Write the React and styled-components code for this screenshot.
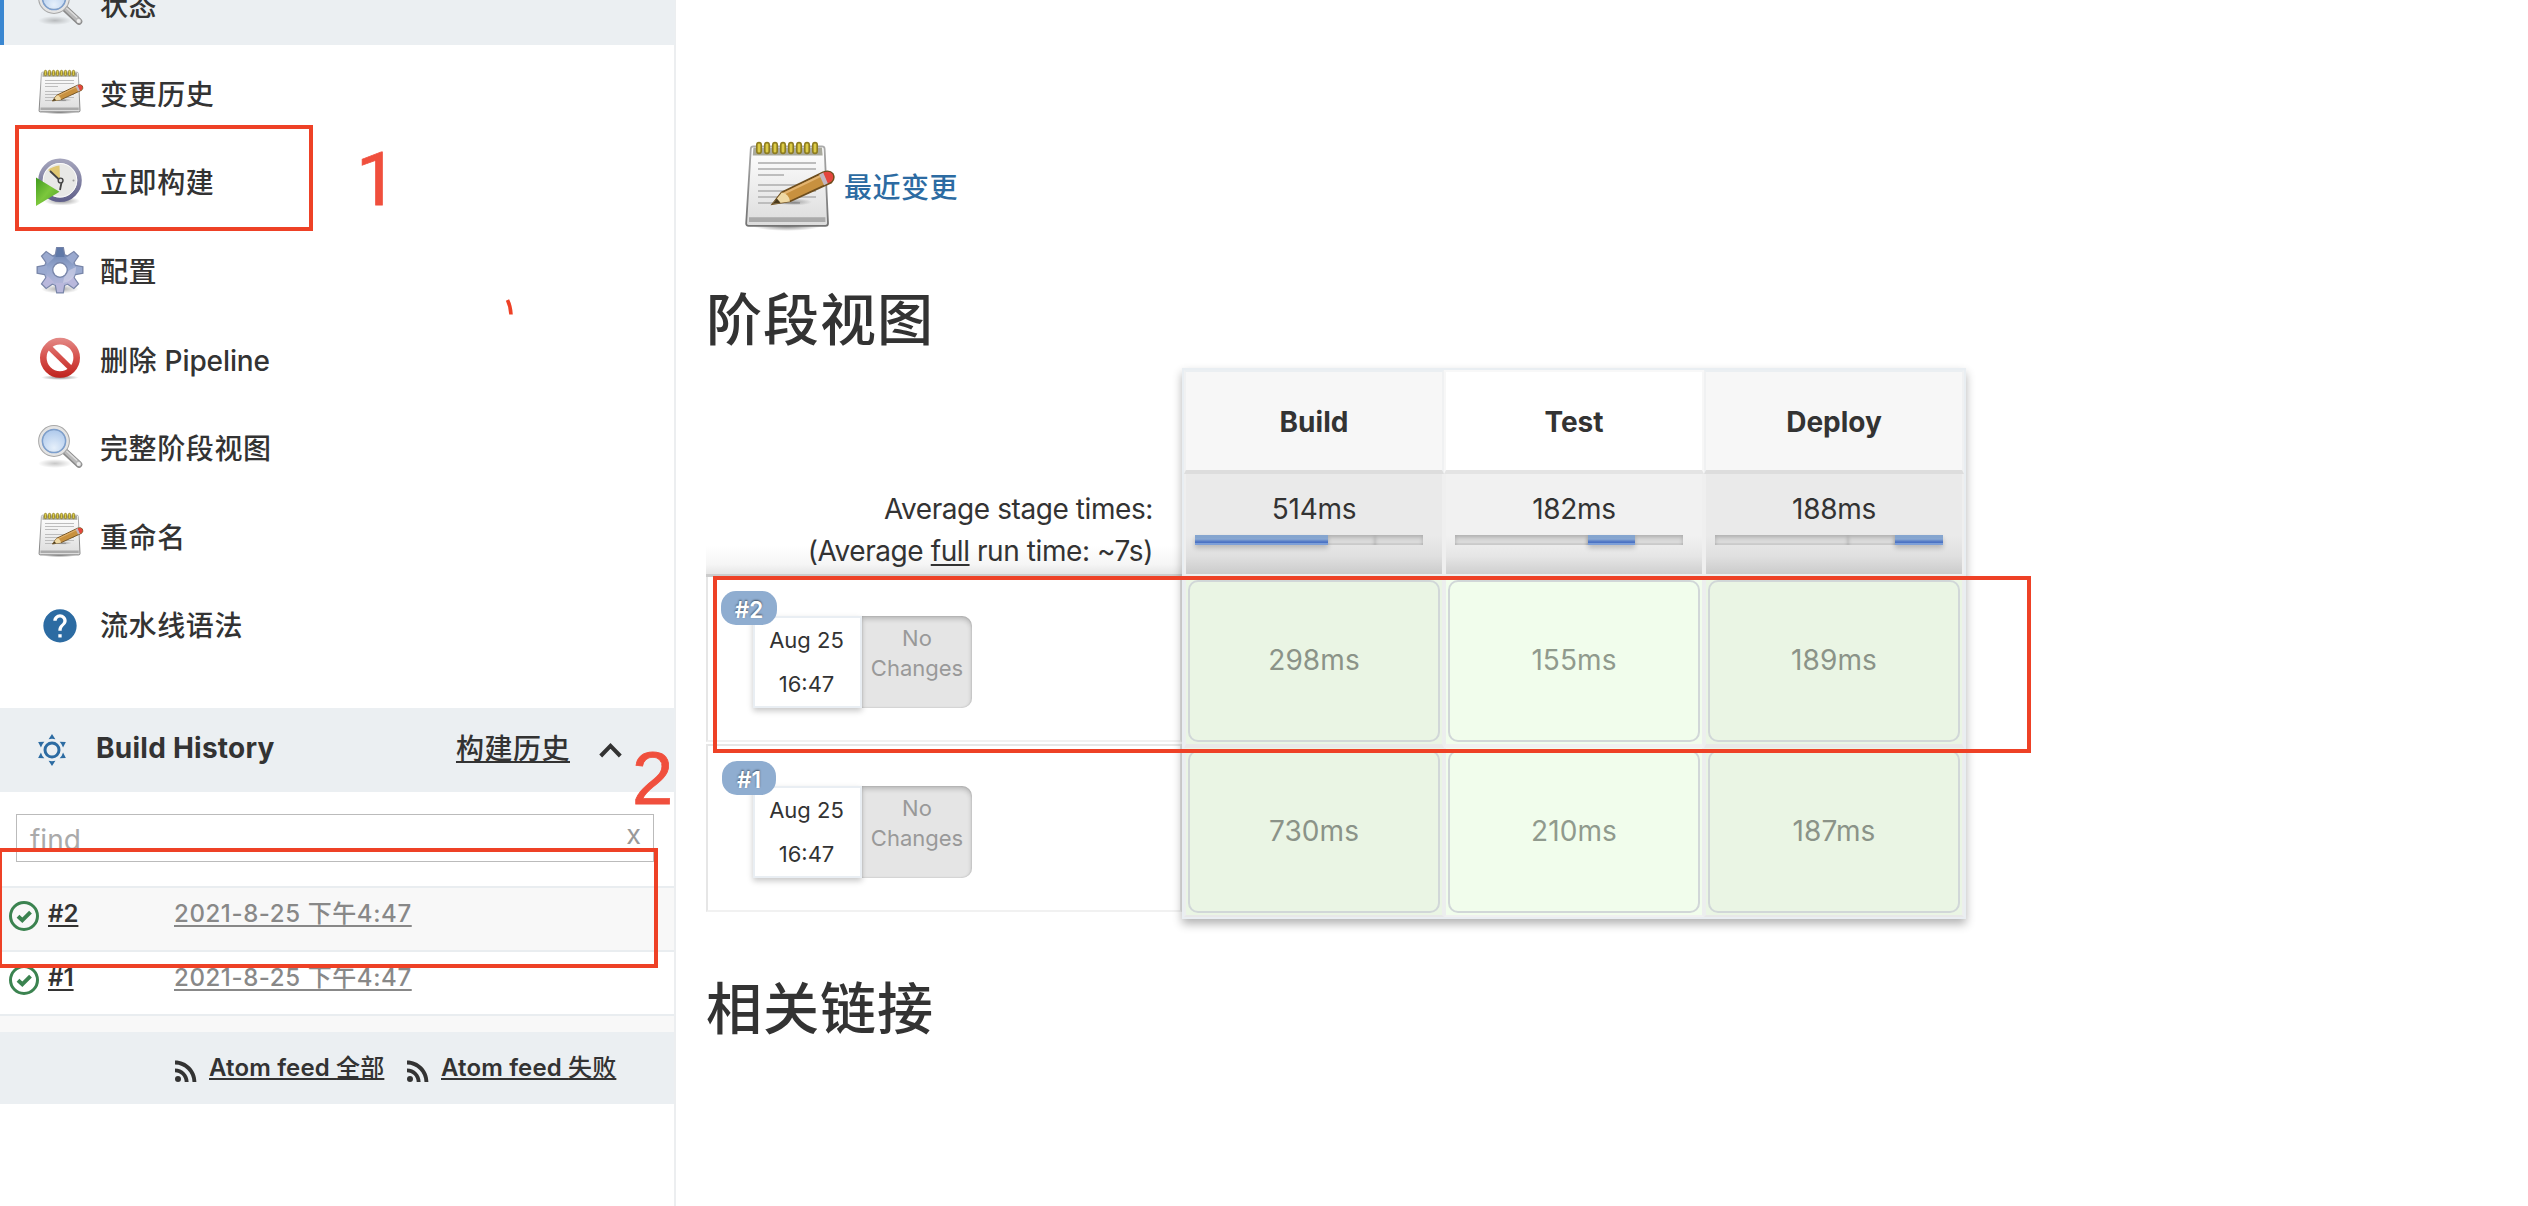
import React from "react";
import styled, { createGlobalStyle } from "styled-components";

const RED = "#ee4126";
const INK = "#333";

const GlobalStyle = createGlobalStyle`
  *, *::before, *::after { box-sizing: border-box; }
  body {
    margin: 0;
    background: #fff;
    color: ${INK};
    font-family: Inter, "Noto Sans CJK SC", sans-serif;
    font-size: 28px;
    overflow: hidden;
  }
  a { color: inherit; }
`;

/* ---------- layout ---------- */

const Page = styled.div`
  position: relative;
  display: flex;
  width: 2528px;
  height: 1206px;
  overflow: hidden;
`;

const Sidebar = styled.aside`
  flex: none;
  width: 676px;
  height: 100%;
  border-right: 2px solid #eceef0;
`;

const Main = styled.main`
  flex: 1;
  padding: 140px 0 0 30px;
`;

/* ---------- task list ---------- */

const ActiveTask = styled.div`
  height: 45px;
  overflow: hidden;
  background: #ebeff2;
  border-left: 4px solid #3a87d1;
  margin-right: -1px;
  margin-bottom: 4.6px;
  & > a {
    margin: -39px 0 0 -4px;
  }
`;

const Task = styled.a`
  display: flex;
  align-items: center;
  gap: 16px;
  height: 88.6px;
  padding-left: 36px;
  color: ${INK};
  font-weight: 500;
  letter-spacing: 0.6px;
  text-decoration: none;
  svg {
    flex: none;
    margin-top: -1px;
  }
`;

const TaskLabel = styled.span`
  margin-top: -2px;
`;

const Latin = styled.span`
  letter-spacing: -0.1px;
`;

/* ---------- build history ---------- */

const HistoryPanel = styled.section`
  margin-top: 38px;
`;

const HistoryHeader = styled.header`
  display: flex;
  align-items: center;
  height: 84px;
  padding: 0 53px 0 38px;
  background: #ebeff2;
  margin-right: -1px;
`;

const HistoryTitle = styled.h3`
  flex: 1;
  margin: -4px 0 0 30px;
  font-size: 28px;
  font-weight: 700;
  letter-spacing: 0.25px;
`;

const TrendLink = styled.a`
  margin: -6px 29px 0 0;
  font-weight: 500;
  letter-spacing: 0.5px;
  text-decoration-thickness: 2px;
  text-underline-offset: 2px;
  text-decoration-skip-ink: none;
`;

const Search = styled.div`
  display: flex;
  justify-content: space-between;
  width: 638px;
  height: 48px;
  margin: 22px 0 24px 16px;
  padding: 0 12px 0 13px;
  border: 1px solid #bbb;
  line-height: 51px;
  color: #aaa;
`;

const Clear = styled.span`
  font-size: 27px;
  line-height: 39px;
  color: #999;
`;

const BuildRow = styled.div`
  display: flex;
  height: 64px;
  padding: 13px 0 0 9px;
  border-top: 2px solid #e9edf0;
  background: ${(p) => (p.$shade ? "#f8f8f8" : "#fff")};
  font-size: 24px;
  line-height: 24px;
`;

const BuildNumber = styled.a`
  width: 126px;
  margin: 1px 0 0 9px;
  font-weight: 600;
  text-decoration-thickness: 2px;
  text-underline-offset: 3px;
  text-decoration-skip-ink: none;
`;

const BuildDate = styled.a`
  margin-top: 1px;
  color: #888;
  font-weight: 500;
  letter-spacing: 0.6px;
  text-decoration-thickness: 2px;
  text-underline-offset: 3px;
  text-decoration-skip-ink: none;
`;

const RowTail = styled.div`
  height: 18px;
  border-top: 2px solid #e9edf0;
  background: #f8f8f8;
`;

const Feeds = styled.footer`
  display: flex;
  height: 72px;
  padding: 28px 0 0 175px;
  gap: 22px;
  background: #ebeff2;
`;

const Feed = styled.a`
  display: flex;
  gap: 12px;
  width: 210px;
  text-decoration: none;
`;

const FeedLabel = styled.span`
  margin-top: -5px;
  font-size: 24px;
  line-height: 26px;
  font-weight: 600;
  letter-spacing: 0.15px;
  white-space: nowrap;
  text-decoration: underline 2px;
  text-underline-offset: 2px;
  text-decoration-skip-ink: none;
`;

const Medium = styled.span`
  font-weight: 500;
`;

/* ---------- main column ---------- */

const RecentChanges = styled.a`
  display: flex;
  align-items: center;
  gap: 8px;
  height: 96px;
  padding-left: 34px;
  color: #2c6ba2;
  font-weight: 500;
  letter-spacing: 0.5px;
  text-decoration: none;
  span {
    margin-top: -4px;
  }
`;

const Heading = styled.h2`
  margin: ${(p) => p.$top} 0 0 0;
  font-size: 56px;
  line-height: 72px;
  font-weight: 500;
  letter-spacing: 1px;
`;

const StageView = styled.div`
  display: flex;
  width: 1260px;
  margin-top: 12px;
`;

const RunColumn = styled.div`
  width: 476px;
  padding-top: 106px;
`;

const Averages = styled.div`
  height: 103px;
  padding: 14px 29px 0 0;
  border-bottom: 3px solid #ccc;
  background: linear-gradient(#fff 72px, #f6f6f6 90px, #e6e6e6 100px);
  text-align: right;
  line-height: 42px;
  letter-spacing: -0.42px;
  u {
    text-decoration-thickness: 2px;
    text-underline-offset: 3px;
  }
`;

const Run = styled.div`
  position: relative;
  display: flex;
  height: ${(p) => p.$height};
  margin-bottom: 2px;
  padding: ${(p) => p.$pad} 0 0 45px;
  border: 2px solid #e6e6e6;
  border-top-width: ${(p) => (p.$first ? "0" : "2px")};
  border-bottom-color: #f1f1f1;
`;

const RunBadge = styled.span`
  position: absolute;
  left: ${(p) => p.$left};
  top: ${(p) => p.$top};
  width: ${(p) => p.$width};
  height: 34px;
  border-radius: 15px;
  background: #8fadd0;
  color: #fff;
  font-size: 22.5px;
  font-weight: 600;
  line-height: 37px;
  text-align: center;
  text-shadow: 0 -1px 2px rgba(0, 0, 0, 0.55);
`;

const RunTime = styled.div`
  width: 109px;
  height: 92px;
  padding-right: 2px;
  border: 2px solid #e9eef3;
  background: #fff;
  box-shadow: 0 3px 6px rgba(0, 0, 0, 0.22);
  font-size: 22px;
  line-height: 44px;
  text-align: center;
`;

const NoChanges = styled.div`
  width: 110px;
  height: 92px;
  padding-top: 7px;
  border-radius: 0 10px 10px 0;
  background: #e5e5e5;
  box-shadow: inset 0 3px 5px rgba(0, 0, 0, 0.2), inset 0 0 2px rgba(0, 0, 0, 0.2);
  color: #999;
  font-size: 22px;
  line-height: 30px;
  text-align: center;
`;

const StageGrid = styled.div`
  position: relative;
  display: grid;
  grid-template-columns: repeat(3, 260px);
  grid-template-rows: 104px 102px 172px 169px;
  border: 2px solid #e9eef2;
  box-shadow: 0 5px 9px rgba(0, 0, 0, 0.3);
`;

const StageName = styled.div`
  border: 2px solid ${(p) => (p.$odd ? "#f0f1f2" : "#f7f7f7")};
  border-top-color: ${(p) => (p.$odd ? "#ebeff2" : "#f8f8f8")};
  border-bottom: 4px solid ${(p) => (p.$odd ? "#ddd" : "#e4e4e4")};
  background: ${(p) => (p.$odd ? "#f7f7f7" : "#fff")};
  font-weight: 700;
  line-height: 101px;
  letter-spacing: 0;
  text-align: center;
`;

const StageAverage = styled.div`
  padding: 14px 0 0 9px;
  border: 0 solid #efefef;
  border-width: 0 2px 2px;
  background: ${(p) =>
    p.$odd
      ? "linear-gradient(#eaeaea 62px, #e0e0e0 82px, #cbcbcb 100px)"
      : "linear-gradient(#f1f1f1 62px, #e6e6e6 82px, #cfcfcf 100px)"};
  line-height: 42px;
`;

const StageAverageText = styled.div`
  padding-right: 9px;
  text-align: center;
  letter-spacing: -0.3px;
`;

const Track = styled.div`
  display: flex;
  width: 228px;
  height: 10px;
  margin-top: 5px;
`;

const Segment = styled.i`
  flex: ${(p) => p.$share};
  background: ${(p) =>
    p.$on ? "linear-gradient(#85a5cf 0 3px, #8aa9d4 4px, #4c73c4 7px 8px, #7d9fd8 8px)" : "#dadada"};
  box-shadow: ${(p) =>
    p.$on
      ? "0 3px 5px rgba(0, 0, 0, 0.2)"
      : "inset 0 2px 4px rgba(0, 0, 0, 0.22), inset 0 -2px 0 #d0d0d0"};
`;

const StageCell = styled.div`
  padding: ${(p) => p.$pad};
  border: 0 solid #eceeee;
  border-width: 0 2px ${(p) => p.$rule};
  border-bottom-color: ${(p) => (p.$odd ? "#e8e8e8" : "#f0f0f0")};
  background: ${(p) => (p.$odd ? "#eaf5e4" : "#f1fdec")};
`;

const StageResult = styled.div`
  height: 100%;
  border: 2px solid #d1d7d8;
  border-radius: 10px;
  color: ${(p) => (p.$odd ? "#8b9388" : "#909a8d")};
  line-height: ${(p) => p.$line};
  letter-spacing: 0.1px;
  text-align: center;
`;

/* ---------- markup drawn over the page ---------- */

const MarkBox = styled.div`
  position: absolute;
  left: ${(p) => p.$x}px;
  top: ${(p) => p.$y}px;
  width: ${(p) => p.$w}px;
  height: ${(p) => p.$h}px;
  border: 4px solid ${RED};
`;

const MarkDigit = styled.span`
  position: absolute;
  left: ${(p) => p.$x}px;
  top: ${(p) => p.$y}px;
  color: #f04f3d;
  font-family: ${(p) => p.$font}, sans-serif;
  font-size: 74px;
  line-height: 74px;
  -webkit-text-stroke: 0.8px #f04f3d;
`;

const MarkTick = styled.svg`
  position: absolute;
  left: 504px;
  top: 297px;
`;

/* ---------- icons ---------- */

const rings = [9.5, 13.5, 17.5, 21.5, 25.5, 29.5, 33.5, 37.5];

const Notepad = ({ size = 48 }) => (
  <svg width={size} height={size} viewBox="0 0 48 48">
    <defs>
      <linearGradient id="pad" x1="0" y1="0" x2="0" y2="1">
        <stop offset="0" stopColor="#fff" />
        <stop offset="1" stopColor="#dcdcdc" />
      </linearGradient>
      <radialGradient id="padShade">
        <stop offset="0" stopColor="#000" stopOpacity=".5" />
        <stop offset="1" stopColor="#000" stopOpacity="0" />
      </radialGradient>
      <linearGradient id="padEdge" x1="0" y1="0" x2="0" y2="1">
        <stop offset="0" stopColor="#aaa" />
        <stop offset="1" stopColor="#737373" />
      </linearGradient>
    </defs>
    <ellipse cx="23.5" cy="43" rx="17" ry="2.5" fill="url(#padShade)" />
    <path d="M6.600 3.200H41q1.200 0 1.300 1.200L44 41.600q0 1.300-1.300 1.300H4.300Q3 42.900 3.100 41.600L5.400 4.400Q5.500 3.200 6.600 3.200Z" fill="url(#pad)" stroke="url(#padEdge)" strokeWidth=".9" />
    <path d="M6.700 3.700H41L41.300 7.800H6.400Z" fill="#a9a99c" />
    <path d="M4.500 38.600H42.700V41H4.500Z" fill="#aaa" />
    <g stroke="#bdbdbd" strokeWidth="1">
      <path d="M9 11.500H38M9 14.500H38M9 17.500H22M9 22.500H38M9 25.500H38M9 28.500H38M9 31.500H30" />
    </g>
    {rings.map((x) => (
      <rect key={x} x={x - 1.1} y="1.300" width="2.200" height="5.400" rx="1.100" fill="#dccb46" stroke="#8d7c20" strokeWidth=".8" />
    ))}
    <ellipse cx="27" cy="31" rx="9" ry="1.800" fill="url(#padShade)" opacity=".6" />
    <path d="M16.300 32L20.800 26.200 41.500 16.200Q44.800 15 46.400 16.900 47.600 19.300 45.700 21.200L25.200 30.600Z" fill="#c8913f" stroke="#6e4e1e" strokeWidth=".9" />
    <path d="M21.500 27L40.200 18" stroke="#e3b470" strokeWidth="1" />
    <path d="M16.300 32L20.900 26.300Q24.500 27 25 30.700Z" fill="#efd9a4" />
    <path d="M16.300 32L18.400 29.300 20.300 31.400Z" fill="#4a3a1c" />
    <path d="M39.600 17.200L41.800 16.200 44.200 21.500 42 22.600Z" fill="#c3b7c0" />
    <path d="M41.600 16.300Q44.800 15.200 46.200 17 47.300 19.300 45.500 20.900L43.900 21.600Z" fill="#e5453d" />
  </svg>
);

const Magnifier = () => (
  <svg width="48" height="48" viewBox="0 0 48 48">
    <defs>
      <radialGradient id="lens" cx=".5" cy=".75" r=".8">
        <stop offset="0" stopColor="#e6f0fb" />
        <stop offset="1" stopColor="#a3c1e8" />
      </radialGradient>
      <radialGradient id="lensShade">
        <stop offset="0" stopColor="#000" stopOpacity=".22" />
        <stop offset="1" stopColor="#000" stopOpacity="0" />
      </radialGradient>
    </defs>
    <ellipse cx="19" cy="39.500" rx="17" ry="4.500" fill="url(#lensShade)" />
    <path d="M29 27.500L43 40.500" stroke="#8a8a8a" strokeWidth="6.600" strokeLinecap="round" />
    <path d="M29 27L43.200 40.200" stroke="#b9b9b9" strokeWidth="4.400" strokeLinecap="round" />
    <path d="M30 26.500L41 36.500" stroke="#dedede" strokeWidth="1.300" />
    <circle cx="42.600" cy="40" r="2" fill="#eee" />
    <circle cx="18" cy="17" r="13.500" fill="url(#lens)" stroke="#a8a8a8" strokeWidth="4.800" />
    <circle cx="18" cy="17" r="13.500" fill="none" stroke="#e4e4e4" strokeWidth="2.800" />
    <circle cx="18" cy="17" r="11.600" fill="none" stroke="#7c9fce" strokeWidth="1.500" />
  </svg>
);

const ClockPlay = () => (
  <svg width="48" height="48" viewBox="0 0 48 48">
    <defs>
      <linearGradient id="rim" x1="0" y1="0" x2="0" y2="1">
        <stop offset="0" stopColor="#a3a3bb" />
        <stop offset="1" stopColor="#62628c" />
      </linearGradient>
      <linearGradient id="play" x1="0" y1="0" x2="1" y2="1">
        <stop offset="0" stopColor="#3f9a1d" />
        <stop offset=".5" stopColor="#7cc73c" />
        <stop offset="1" stopColor="#4da327" />
      </linearGradient>
      <radialGradient id="clockShade">
        <stop offset="0" stopColor="#000" stopOpacity=".4" />
        <stop offset="1" stopColor="#000" stopOpacity="0" />
      </radialGradient>
    </defs>
    <ellipse cx="26" cy="43" rx="18" ry="4.500" fill="url(#clockShade)" />
    <circle cx="24" cy="22.300" r="19.500" fill="#e8e8e6" stroke="url(#rim)" strokeWidth="4.600" />
    <circle cx="24" cy="22.300" r="16.800" fill="none" stroke="#fbfbfb" strokeWidth="1" />
    <path d="M24 21L12 12Q17 8 23.500 7.500Z" fill="#e0c772" />
    <path d="M14 13L23 21.500M25.500 24.500L24 32" stroke="#444" strokeWidth="1.800" />
    <circle cx="24.600" cy="22.500" r="2.400" fill="#ddd" stroke="#444" strokeWidth="1.400" />
    <circle cx="37.500" cy="22.500" r="1" fill="#999" />
    <path d="M0 19.500L23.500 33.700 0 48Z" fill="url(#play)" />
  </svg>
);

const teeth = [0, 45, 90, 135, 180, 225, 270, 315];

const Gear = () => (
  <svg width="48" height="48" viewBox="0 0 48 48">
    <defs>
      <linearGradient id="gear" x1="0" y1="0" x2="0" y2="48" gradientUnits="userSpaceOnUse">
        <stop offset="0" stopColor="#6079a8" />
        <stop offset=".45" stopColor="#97a8cf" />
        <stop offset="1" stopColor="#c4bfdf" />
      </linearGradient>
      <radialGradient id="gearShade">
        <stop offset="0" stopColor="#000" stopOpacity=".35" />
        <stop offset="1" stopColor="#000" stopOpacity="0" />
      </radialGradient>
      <mask id="gearHole">
        <rect width="48" height="48" fill="#fff" />
        <circle cx="24" cy="23" r="6.500" fill="#000" />
      </mask>
    </defs>
    <ellipse cx="24" cy="42" rx="19" ry="4.500" fill="url(#gearShade)" />
    <g mask="url(#gearHole)">
      <g fill="#7885a8">
        {teeth.map((a) => (
          <path key={a} d="M18.300 10L20.200 -.500H27.800L29.700 10Z" transform={`rotate(${a} 24 23)`} />
        ))}
        <circle cx="24" cy="23" r="16.500" />
      </g>
      <circle cx="24" cy="23" r="15.500" fill="url(#gear)" />
      {teeth.map((a) => (
        <path
          key={a}
          d="M19.500 10L21.200 .800H26.800L28.500 10Z"
          transform={`rotate(${a} 24 23)`}
          fill={a === 0 ? "#6079a8" : a > 90 && a < 270 ? "#b9b8dc" : "#9aa9cf"}
        />
      ))}
      <path d="M27 36Q28 24 40 20Q40 34 27 36Z" fill="#d4d3ea" opacity=".6" />
      <circle cx="24" cy="23" r="7.200" fill="none" stroke="#7885a8" strokeWidth="1.400" />
    </g>
  </svg>
);

const NoEntry = () => (
  <svg width="48" height="48" viewBox="0 0 48 48">
    <defs>
      <linearGradient id="ban" x1="0" y1="2" x2="0" y2="43" gradientUnits="userSpaceOnUse">
        <stop offset="0" stopColor="#e48d8a" />
        <stop offset=".5" stopColor="#d6504b" />
        <stop offset="1" stopColor="#bf231d" />
      </linearGradient>
      <radialGradient id="banShade">
        <stop offset="0" stopColor="#000" stopOpacity=".45" />
        <stop offset="1" stopColor="#000" stopOpacity="0" />
      </radialGradient>
    </defs>
    <ellipse cx="24" cy="42.500" rx="19" ry="2.500" fill="url(#banShade)" />
    <circle cx="24" cy="22.800" r="16.700" fill="#fff" stroke="url(#ban)" strokeWidth="6.600" />
    <path d="M12.500 11.500L35.500 34.100" stroke="url(#ban)" strokeWidth="5.400" />
  </svg>
);

const Help = () => (
  <svg width="48" height="48" viewBox="-2.400 -2.900 28.800 28.800">
    <path
      fill="#2c6ba2"
      d="M12 2C6.480 2 2 6.480 2 12s4.480 10 10 10 10-4.480 10-10S17.520 2 12 2zm1 17h-2v-2h2v2zm2.070-7.750l-.9.920C13.450 12.900 13 13.500 13 15h-2v-.5c0-1.100.450-2.100 1.170-2.830l1.240-1.260c.370-.360.590-.860.590-1.410 0-1.100-.900-2-2-2s-2 .900-2 2H8c0-2.210 1.790-4 4-4s4 1.790 4 4c0 .880-.360 1.680-.930 2.250z"
    />
  </svg>
);

const Weather = () => (
  <svg width="28" height="32" viewBox="0 0 28 32" fill="#2c6ba2">
    <circle cx="14" cy="16" r="7" fill="none" stroke="#2c6ba2" strokeWidth="3" />
    {[0, 60, 120, 180, 240, 300].map((a) => (
      <path key={a} d="M14 0L17.400 5.200Q14 4.300 10.600 5.200Z" transform={`rotate(${a} 14 16)`} />
    ))}
  </svg>
);

const Chevron = () => (
  <svg width="23" height="16" viewBox="0 0 23 16" fill="none" stroke={INK} strokeWidth="4">
    <path d="M1.700 14L11.500 3.800 21.300 14" />
  </svg>
);

const Success = () => (
  <svg width="30" height="30" viewBox="0 0 30 30" fill="none" stroke="#3b8350">
    <circle cx="15" cy="15" r="13.500" strokeWidth="3" />
    <path d="M9 15.300L13.300 19.300 21.500 11.200" strokeWidth="4" />
  </svg>
);

const Rss = () => (
  <svg width="22" height="22" viewBox="4 4 16 16" fill={INK}>
    <circle cx="6.180" cy="17.820" r="2.180" />
    <path d="M4 4.440v2.830c7.030 0 12.730 5.700 12.730 12.730h2.830c0-8.590-6.970-15.560-15.560-15.560zm0 5.660v2.830c3.900 0 7.070 3.170 7.070 7.070h2.830c0-5.470-4.430-9.900-9.900-9.900z" />
  </svg>
);

/* ---------- data ---------- */

const tasks = [
  { label: "变更历史", Icon: Notepad },
  { label: "立即构建", Icon: ClockPlay },
  { label: "配置", Icon: Gear },
  { label: "删除", latin: " Pipeline", Icon: NoEntry },
  { label: "完整阶段视图", Icon: Magnifier },
  { label: "重命名", Icon: Notepad },
  { label: "流水线语法", Icon: Help },
];

const stages = [
  { name: "Build", average: "514ms", runs: ["298ms", "730ms"] },
  { name: "Test", average: "182ms", runs: ["155ms", "210ms"] },
  { name: "Deploy", average: "188ms", runs: ["189ms", "187ms"] },
];

const shares = [133, 47, 48];

export default function App() {
  return (
    <Page>
      <GlobalStyle />
      <Sidebar>
        <ActiveTask>
          <Task>
            <Magnifier />
            <TaskLabel>状态</TaskLabel>
          </Task>
        </ActiveTask>
        {tasks.map(({ label, latin, Icon }) => (
          <Task key={label}>
            <Icon />
            <TaskLabel>
              {label}
              {latin && <Latin>{latin}</Latin>}
            </TaskLabel>
          </Task>
        ))}
        <HistoryPanel>
          <HistoryHeader>
            <Weather />
            <HistoryTitle>Build History</HistoryTitle>
            <TrendLink href="#">构建历史</TrendLink>
            <Chevron />
          </HistoryHeader>
          <Search>
            <span>find</span>
            <Clear>x</Clear>
          </Search>
          {["#2", "#1"].map((n, i) => (
            <BuildRow key={n} $shade={i === 0}>
              <Success />
              <BuildNumber href="#">{n}</BuildNumber>
              <BuildDate href="#">2021-8-25 下午4:47</BuildDate>
            </BuildRow>
          ))}
          <RowTail />
          <Feeds>
            {["全部", "失败"].map((kind) => (
              <Feed key={kind} href="#">
                <Rss />
                <FeedLabel>
                  Atom feed <Medium>{kind}</Medium>
                </FeedLabel>
              </Feed>
            ))}
          </Feeds>
        </HistoryPanel>
      </Sidebar>

      <Main>
        <RecentChanges>
          <Notepad size={96} />
          <span>最近变更</span>
        </RecentChanges>
        <Heading $top="48px">阶段视图</Heading>
        <StageView>
          <RunColumn>
            <Averages>
              <div>Average stage times:</div>
              <div>
                (Average <u>full</u> run time: ~7s)
              </div>
            </Averages>
            <Run $first $height="165px" $pad="39px">
              <RunBadge $left="13px" $top="14px" $width="56px">#2</RunBadge>
              <RunTime>
                Aug 25
                <br />
                16:47
              </RunTime>
              <NoChanges>
                No
                <br />
                Changes
              </NoChanges>
            </Run>
            <Run $height="168px" $pad="40px">
              <RunBadge $left="14px" $top="15px" $width="54px">#1</RunBadge>
              <RunTime>
                Aug 25
                <br />
                16:47
              </RunTime>
              <NoChanges>
                No
                <br />
                Changes
              </NoChanges>
            </Run>
          </RunColumn>
          <StageGrid>
            {stages.map((s, i) => (
              <StageName key={s.name} $odd={i % 2 === 0}>
                {s.name}
              </StageName>
            ))}
            {stages.map((s, i) => (
              <StageAverage key={s.name} $odd={i % 2 === 0}>
                <StageAverageText>{s.average}</StageAverageText>
                <Track>
                  {shares.map((share, k) => (
                    <Segment key={k} $share={share} $on={k === i} />
                  ))}
                </Track>
              </StageAverage>
            ))}
            {stages.map((s, i) => (
              <StageCell key={s.name} $odd={i % 2 === 0} $pad="4px 2px 2px" $rule="4px">
                <StageResult $odd={i % 2 === 0} $line="156px">
                  {s.runs[0]}
                </StageResult>
              </StageCell>
            ))}
            {stages.map((s, i) => (
              <StageCell key={s.name} $odd={i % 2 === 0} $pad="2px 2px 2px" $rule="2px">
                <StageResult $odd={i % 2 === 0} $line="159px">
                  {s.runs[1]}
                </StageResult>
              </StageCell>
            ))}
          </StageGrid>
        </StageView>
        <Heading $top="54px">相关链接</Heading>
      </Main>

      <MarkBox $x={15} $y={125} $w={298} $h={106} />
      <MarkDigit $x={356} $y={143} $font="Roboto">1</MarkDigit>
      <MarkTick width="12" height="20" viewBox="0 0 12 20">
        <path d="M3.500 3Q6.500 9 7 17.500" fill="none" stroke={RED} strokeWidth="3.600" />
      </MarkTick>
      <MarkBox $x={-2} $y={848} $w={660} $h={120} />
      <MarkDigit $x={632} $y={742} $font={'"Liberation Sans"'}>2</MarkDigit>
      <MarkBox $x={713} $y={576} $w={1318} $h={177} />
    </Page>
  );
}
